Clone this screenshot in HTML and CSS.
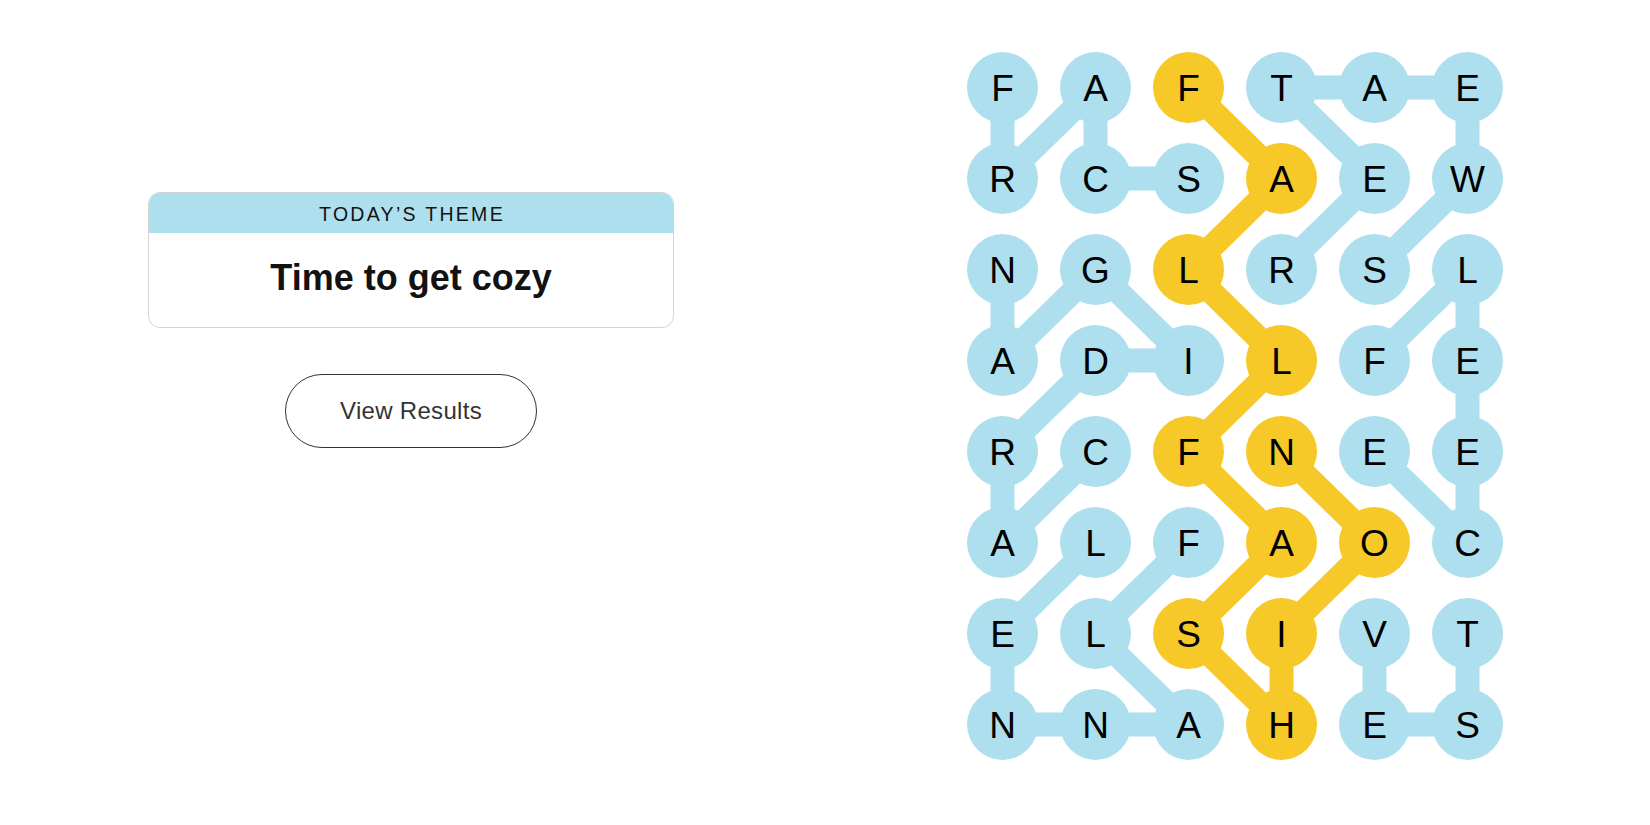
FILE: index.html
```html
<!DOCTYPE html>
<html lang="en">
<head>
<meta charset="utf-8">
<title>Strands</title>
<link rel="stylesheet" href="styles.css">
</head>
<body>
<main class="page">
  <section class="left">
    <div class="theme-card">
      <div class="theme-head">TODAY’S THEME</div>
      <div class="theme-body">Time to get cozy</div>
    </div>
    <button class="results-btn">View Results</button>
  </section>
  <section class="right">
    <div class="board">
      <svg class="links" width="558" height="728" viewBox="0 0 558 728">
        <g fill="none" stroke="#aedfee" stroke-width="24" stroke-linejoin="round">
          <polyline points="232.5,136.5 139.5,136.5 139.5,45.5 46.5,136.5 46.5,45.5"/>
          <polyline points="418.5,227.5 511.5,136.5 511.5,45.5 418.5,45.5 325.5,45.5 418.5,136.5 325.5,227.5"/>
          <polyline points="139.5,409.5 46.5,500.5 46.5,409.5 139.5,318.5 232.5,318.5 139.5,227.5 46.5,318.5 46.5,227.5"/>
          <polyline points="232.5,500.5 139.5,591.5 232.5,682.5 139.5,682.5 46.5,682.5 46.5,591.5 139.5,500.5"/>
          <polyline points="418.5,318.5 511.5,227.5 511.5,318.5 511.5,409.5 511.5,500.5 418.5,409.5"/>
          <polyline points="418.5,591.5 418.5,682.5 511.5,682.5 511.5,591.5"/>
        </g>
        <g fill="none" stroke="#f6c928" stroke-width="24" stroke-linejoin="round">
          <polyline points="232.5,45.5 325.5,136.5 232.5,227.5 325.5,318.5 232.5,409.5 325.5,500.5 232.5,591.5 325.5,682.5 325.5,591.5 418.5,500.5 325.5,409.5"/>
        </g>
      </svg>
      <div class="cell"><span class="dot">F</span></div>
      <div class="cell"><span class="dot">A</span></div>
      <div class="cell"><span class="dot gold">F</span></div>
      <div class="cell"><span class="dot">T</span></div>
      <div class="cell"><span class="dot">A</span></div>
      <div class="cell"><span class="dot">E</span></div>

      <div class="cell"><span class="dot">R</span></div>
      <div class="cell"><span class="dot">C</span></div>
      <div class="cell"><span class="dot">S</span></div>
      <div class="cell"><span class="dot gold">A</span></div>
      <div class="cell"><span class="dot">E</span></div>
      <div class="cell"><span class="dot">W</span></div>

      <div class="cell"><span class="dot">N</span></div>
      <div class="cell"><span class="dot">G</span></div>
      <div class="cell"><span class="dot gold">L</span></div>
      <div class="cell"><span class="dot">R</span></div>
      <div class="cell"><span class="dot">S</span></div>
      <div class="cell"><span class="dot">L</span></div>

      <div class="cell"><span class="dot">A</span></div>
      <div class="cell"><span class="dot">D</span></div>
      <div class="cell"><span class="dot">I</span></div>
      <div class="cell"><span class="dot gold">L</span></div>
      <div class="cell"><span class="dot">F</span></div>
      <div class="cell"><span class="dot">E</span></div>

      <div class="cell"><span class="dot">R</span></div>
      <div class="cell"><span class="dot">C</span></div>
      <div class="cell"><span class="dot gold">F</span></div>
      <div class="cell"><span class="dot gold">N</span></div>
      <div class="cell"><span class="dot">E</span></div>
      <div class="cell"><span class="dot">E</span></div>

      <div class="cell"><span class="dot">A</span></div>
      <div class="cell"><span class="dot">L</span></div>
      <div class="cell"><span class="dot">F</span></div>
      <div class="cell"><span class="dot gold">A</span></div>
      <div class="cell"><span class="dot gold">O</span></div>
      <div class="cell"><span class="dot">C</span></div>

      <div class="cell"><span class="dot">E</span></div>
      <div class="cell"><span class="dot">L</span></div>
      <div class="cell"><span class="dot gold">S</span></div>
      <div class="cell"><span class="dot gold">I</span></div>
      <div class="cell"><span class="dot">V</span></div>
      <div class="cell"><span class="dot">T</span></div>

      <div class="cell"><span class="dot">N</span></div>
      <div class="cell"><span class="dot">N</span></div>
      <div class="cell"><span class="dot">A</span></div>
      <div class="cell"><span class="dot gold">H</span></div>
      <div class="cell"><span class="dot">E</span></div>
      <div class="cell"><span class="dot">S</span></div>
    </div>
  </section>
</main>
</body>
</html>
```
FILE: styles.css
```css
* { box-sizing: border-box; }
html, body {
  margin: 0;
  padding: 0;
  background: #ffffff;
}
body {
  font-family: "Liberation Sans", Arial, sans-serif;
  color: #000;
}
.page {
  display: flex;
  width: 1650px;
  height: 825px;
}
.left {
  width: 825px;
  display: flex;
  flex-direction: column;
  align-items: center;
  padding-top: 192px;
  padding-right: 3px;
}
.theme-card {
  width: 526px;
  height: 136px;
  border: 1px solid #d4d4d4;
  border-radius: 12px;
  overflow: hidden;
  display: flex;
  flex-direction: column;
}
.theme-head {
  height: 40px;
  background: #aedfee;
  display: flex;
  align-items: center;
  justify-content: center;
  font-size: 19.5px;
  letter-spacing: 2.3px;
  color: #121212;
  padding-top: 2px;
  padding-left: 2px;
}
.theme-body {
  flex: 1;
  display: flex;
  align-items: center;
  justify-content: center;
  font-size: 36px;
  font-weight: 700;
  color: #121212;
  padding-bottom: 4px;
}
.results-btn {
  margin-top: 46px;
  width: 252px;
  height: 74px;
  border: 1px solid #333;
  border-radius: 37px;
  background: #fff;
  font-family: "Liberation Sans", Arial, sans-serif;
  font-size: 24px;
  letter-spacing: 0.3px;
  color: #333;
  padding: 0;
}
.right {
  width: 825px;
  display: flex;
  justify-content: center;
  padding-top: 42px;
  padding-right: 5px;
}
.board {
  position: relative;
  display: grid;
  grid-template-columns: repeat(6, 93px);
  grid-template-rows: repeat(8, 91px);
  width: 558px;
  height: 728px;
}
.links {
  position: absolute;
  left: 0;
  top: 0;
  z-index: 0;
}
.cell {
  position: relative;
  z-index: 1;
  display: flex;
  align-items: center;
  justify-content: center;
}
.dot {
  width: 71px;
  height: 71px;
  border-radius: 50%;
  background: #aedfee;
  display: flex;
  align-items: center;
  justify-content: center;
  font-size: 37px;
  line-height: 1;
  color: #000;
  padding-top: 1px;
}
.dot.gold {
  background: #f6c928;
}
```
